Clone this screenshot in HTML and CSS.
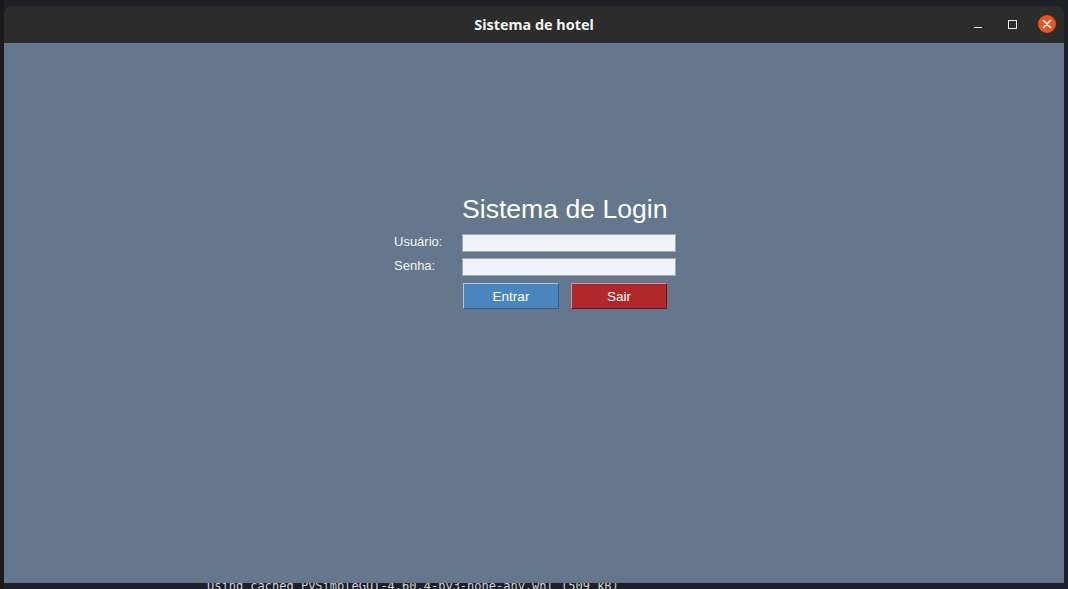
FILE: index.html
```html
<!DOCTYPE html>
<html lang="pt">
<head>
<meta charset="utf-8">
<title>Sistema de hotel</title>
<link rel="stylesheet" href="styles.css">
</head>
<body>
  <div class="desktop">
    <div class="window">
      <div class="titlebar">
        <span class="title">Sistema de hotel</span>
        <div class="controls">
          <span class="ctl ctl-min"></span>
          <span class="ctl ctl-max"></span>
          <span class="ctl ctl-close">
            <svg width="10" height="10" viewBox="0 0 10 10"><path d="M1.5 1.5 L8.5 8.5 M8.5 1.5 L1.5 8.5" stroke="#fff" stroke-width="1.6" stroke-linecap="round"/></svg>
          </span>
        </div>
      </div>
      <div class="content">
        <div class="form">
          <div class="form-title">Sistema de Login</div>
          <label class="lbl">Usuário:</label>
          <input class="field" type="text">
          <label class="lbl">Senha:</label>
          <input class="field" type="password">
          <div class="buttons">
            <button class="btn btn-entrar">Entrar</button>
            <button class="btn btn-sair">Sair</button>
          </div>
        </div>
      </div>
    </div>
    <div class="terminal-line">Using cached PySimpleGUI-4.60.4-py3-none-any.whl (509 kB)</div>
  </div>
</body>
</html>
```

FILE: styles.css
```css
html, body {
  margin: 0;
  padding: 0;
  background: #1c1e24;
  width: 1068px;
  height: 589px;
  overflow: hidden;
}

.desktop {
  position: relative;
  width: 1068px;
  height: 589px;
  background: linear-gradient(to right, #1a1a1a 0 4px, #1e2027 4px);
  padding-top: 6px;
  box-sizing: border-box;
}

.window {
  margin-left: 4px;
  width: 1060px;
  height: 577px;
  display: flex;
  flex-direction: column;
  position: relative;
  z-index: 1;
}

.titlebar {
  height: 37px;
  background: #2c2c2c;
  border-radius: 8px 8px 0 0;
  display: flex;
  align-items: center;
  justify-content: center;
  position: relative;
  flex: none;
}

.title {
  font-family: "Noto Sans", "DejaVu Sans", sans-serif;
  font-weight: 700;
  font-size: 14.4px;
  color: #f2f2f2;
  margin-top: -1px;
}

.controls {
  position: absolute;
  right: 8px;
  top: 0;
  height: 37px;
  display: flex;
  align-items: center;
}

.ctl {
  display: inline-flex;
  align-items: center;
  justify-content: center;
  box-sizing: border-box;
}

.ctl-min {
  width: 8px;
  height: 1px;
  background: #f0f0f0;
  margin-right: 26px;
  margin-top: 6px;
}

.ctl-max {
  width: 9px;
  height: 9px;
  border: 1px solid #f0f0f0;
  margin-right: 21px;
  margin-top: -1px;
}

.ctl-close {
  width: 18px;
  height: 18px;
  border-radius: 50%;
  background: #e95420;
  margin-top: -1px;
}

.content {
  flex: 1;
  background: #64778d;
}

.form {
  margin-left: 390px;
  padding-top: 151px;
  display: grid;
  grid-template-columns: 68px 214px;
  row-gap: 6px;
  font-family: "Liberation Sans", Arial, sans-serif;
}

.form-title {
  grid-column: 2;
  font-size: 26.6px;
  line-height: 30px;
  color: #ffffff;
  margin-bottom: 4px;
}

.lbl {
  grid-column: 1;
  font-size: 13px;
  line-height: 18px;
  color: #f4f4f4;
  margin-top: -1px;
}

.field {
  grid-column: 2;
  box-sizing: border-box;
  width: 214px;
  height: 18px;
  margin: 0;
  padding: 0 2px;
  border: 1px solid #a3a8ae;
  background: #f0f3f7;
  outline: none;
  font-family: "Liberation Sans", Arial, sans-serif;
  font-size: 13px;
}

.buttons {
  grid-column: 2;
  display: flex;
  gap: 12px;
  padding-left: 1px;
  margin-top: 1px;
}

.btn {
  box-sizing: border-box;
  width: 96px;
  height: 26px;
  padding: 0;
  margin: 0;
  font-family: "Liberation Sans", Arial, sans-serif;
  font-size: 13.5px;
  color: #ffffff;
  border-width: 1px;
  border-style: solid;
}

.btn-entrar {
  background: #4a86bd;
  border-color: #a6c8ee #2d5f8c #2d5f8c #a6c8ee;
}

.btn-sair {
  background: #b0292a;
  border-color: #ee8a8a #6e1414 #6e1414 #ee8a8a;
}

.terminal-line {
  position: absolute;
  left: 207px;
  top: 578px;
  font-family: "DejaVu Sans Mono", monospace;
  font-size: 12px;
  line-height: 16px;
  color: #d4d4d4;
  white-space: nowrap;
  z-index: 0;
}
```
